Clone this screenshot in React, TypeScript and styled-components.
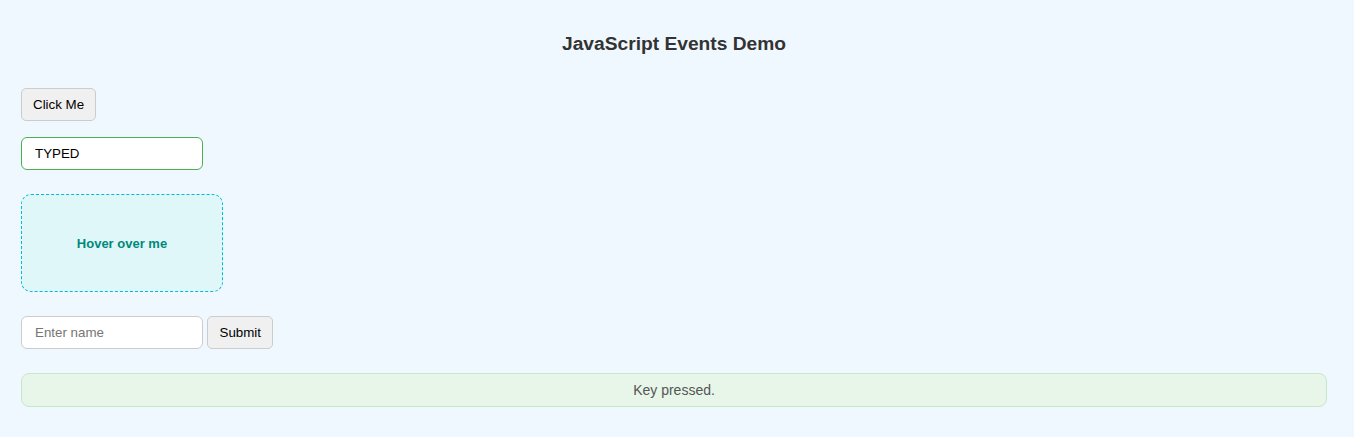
import React, { useState } from "react";
import styled, { createGlobalStyle } from "styled-components";

const GlobalStyle = createGlobalStyle`
  html, body {
    margin: 0;
    padding: 0;
    background: #f0f8ff;
  }
  body {
    font-family: "Liberation Sans", Arial, sans-serif;
    color: #333;
  }
`;

const Page = styled.div`
  padding: 21px 27px 30px 21px;
  display: flex;
  flex-direction: column;
  align-items: flex-start;
`;

const Title = styled.h2`
  align-self: stretch;
  text-align: center;
  font-size: 19.2px;
  font-weight: bold;
  color: #333;
  margin: 12px 0 33px;
  line-height: 22px;
`;

const Button = styled.button<{ $wide?: boolean }>`
  font-family: "Liberation Sans", Arial, sans-serif;
  font-size: 13.333px;
  line-height: 15px;
  padding: 8px ${(p) => (p.$wide ? 11.5 : 11)}px;
  background: #f0f0f0;
  border: 1px solid #ccc;
  border-radius: 5px;
  color: #000;
  cursor: pointer;
`;

const TextInput = styled.input<{ $accent?: boolean }>`
  box-sizing: border-box;
  width: 182px;
  height: 33px;
  font-family: "Liberation Sans", Arial, sans-serif;
  font-size: 13.333px;
  padding: 8px 13px;
  background: #fff;
  border: 1px solid ${(p) => (p.$accent ? "#4caf50" : "#ccc")};
  border-radius: 6px;
  color: #000;
  outline: none;
  &::placeholder {
    color: #757575;
  }
`;

const Section = styled.div<{ $gap: number }>`
  margin-top: ${(p) => p.$gap}px;
`;

const HoverBox = styled.div`
  box-sizing: border-box;
  width: 202px;
  height: 98px;
  display: flex;
  align-items: center;
  justify-content: center;
  background: #e0f7fa;
  border: 1px dashed #00bcd4;
  border-radius: 10px;
  color: #00897b;
  font-weight: bold;
  font-size: 13px;
`;

const Form = styled.form`
  display: flex;
  gap: 4px;
  align-items: center;
`;

const Status = styled.div`
  align-self: stretch;
  box-sizing: border-box;
  margin-top: 24px;
  height: 34px;
  padding: 8px;
  background: #e8f5e9;
  border: 1px solid #c8e6c9;
  border-radius: 8px;
  text-align: center;
  font-size: 14px;
  line-height: 16px;
  color: #555;
`;

export default function App() {
  const [typed, setTyped] = useState("TYPED");
  const [name, setName] = useState("");
  return (
    <>
      <GlobalStyle />
      <Page>
        <Title>JavaScript Events Demo</Title>
        <Button type="button">Click Me</Button>
        <Section $gap={16}>
          <TextInput $accent value={typed} onChange={(e) => setTyped(e.target.value)} />
        </Section>
        <Section $gap={24}>
          <HoverBox>Hover over me</HoverBox>
        </Section>
        <Section $gap={24}>
          <Form onSubmit={(e) => e.preventDefault()}>
            <TextInput placeholder="Enter name" value={name} onChange={(e) => setName(e.target.value)} />
            <Button type="submit" $wide>Submit</Button>
          </Form>
        </Section>
        <Status>Key pressed.</Status>
      </Page>
    </>
  );
}
